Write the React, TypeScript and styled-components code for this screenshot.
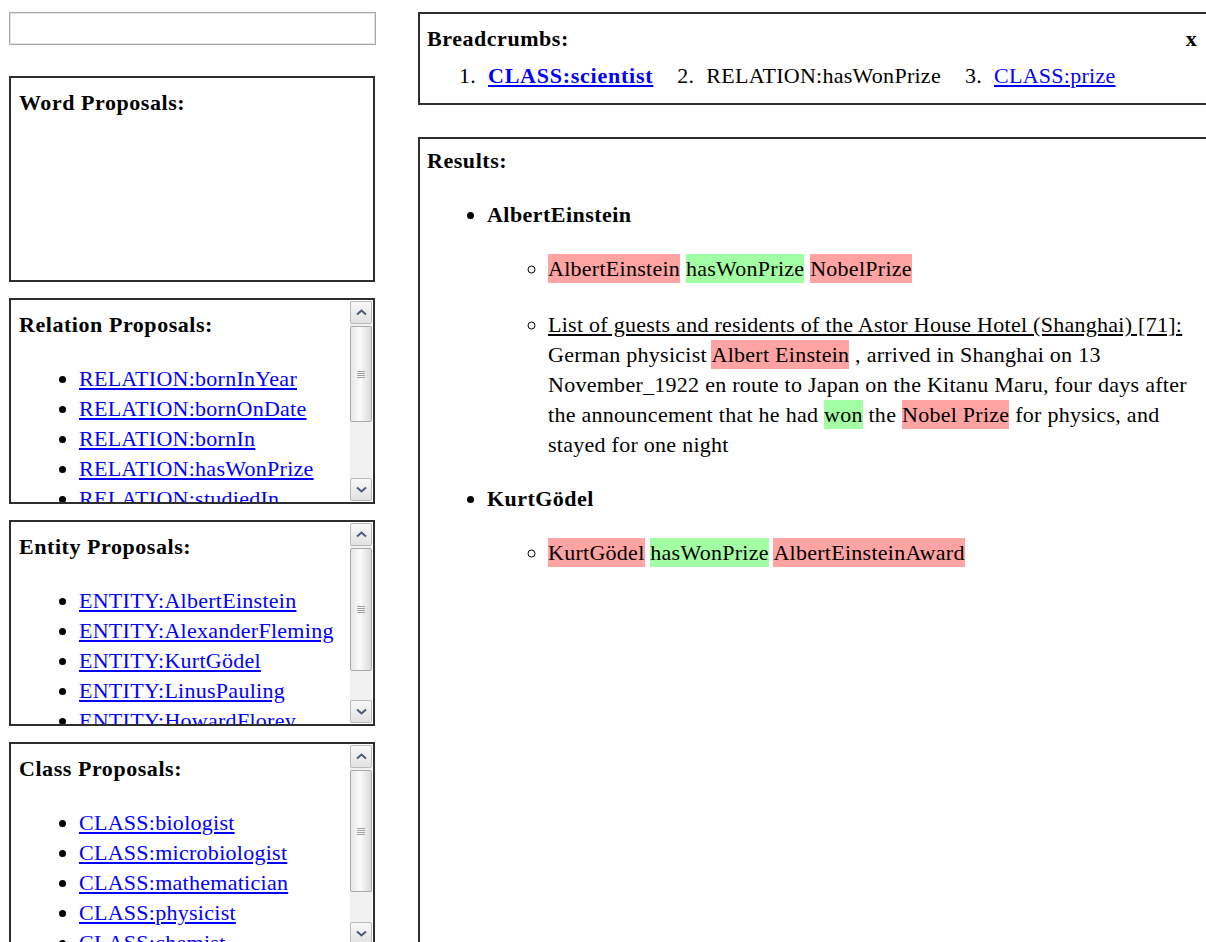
import React from 'react';
import styled, { createGlobalStyle } from 'styled-components';

const GlobalStyle = createGlobalStyle`
  html, body {
    margin: 0;
    padding: 0;
    background: #fff;
    overflow: hidden;
  }
  body {
    font-family: "Liberation Serif", "Times New Roman", serif;
    font-size: 22px;
    letter-spacing: 0.27px;
    color: #000;
  }
`;

const Page = styled.div`
  display: flex;
  align-items: flex-start;
  gap: 42px;
  padding: 12px 0 0 9px;
  width: 1300px;
`;

const Sidebar = styled.aside`
  width: 367px;
  display: flex;
  flex-direction: column;
  gap: 16px;
`;

const SearchInput = styled.input`
  box-sizing: border-box;
  width: 367px;
  height: 33px;
  margin: 0 0 15px;
  border: 1px solid #a8a8a8;
  box-shadow: inset 0 0 0 1px #e4e4e4;
  font: inherit;
  padding: 0 6px;
  outline: none;
`;

const Panel = styled.section`
  box-sizing: border-box;
  width: 366px;
  height: 206px;
  border: 2px solid #2e2e2e;
  display: flex;
  overflow: hidden;
`;

const PanelBody = styled.div`
  flex: 1;
  min-width: 0;
  padding: 10px 0 0 8px;
  overflow: hidden;
`;

const Title = styled.div`
  font-weight: bold;
  line-height: 30px;
  letter-spacing: 0.55px;
`;

const ProposalList = styled.ul`
  margin: 24px 0 0;
  padding-left: 60px;
  list-style: disc;

  li {
    line-height: 30px;
    white-space: nowrap;
  }
`;

const Link = styled.a<{ $strong?: boolean }>`
  color: #0000ff;
  text-decoration: underline;
  font-weight: ${(p) => (p.$strong ? 'bold' : 'normal')};
  letter-spacing: ${(p) => (p.$strong ? '0.75px' : '0.27px')};
  cursor: pointer;
`;

/* Classic window scrollbar drawn beside the list */
const Scrollbar = styled.div`
  width: 22px;
  margin: 1px 1px 1px 0;
  display: flex;
  flex-direction: column;
  gap: 2px;
  background: #f1f1f1;
`;

const ScrollButton = styled.div`
  box-sizing: border-box;
  height: 23px;
  border: 1px solid #b9b9b9;
  border-radius: 2px;
  background: linear-gradient(#f9f9f9, #e1e1e1);
  display: flex;
  align-items: center;
  justify-content: center;
`;

const Thumb = styled.div<{ $h: number }>`
  box-sizing: border-box;
  height: ${(p) => p.$h}px;
  border: 1px solid #a9a9a9;
  border-radius: 2px;
  background: linear-gradient(90deg, #e6e6e6, #fbfbfb 45%, #d9d9d9);
  display: flex;
  flex-direction: column;
  align-items: center;
  justify-content: center;
  gap: 1px;
`;

const Grip = styled.span`
  display: block;
  width: 8px;
  height: 1px;
  background: #a3a3a3;
`;

const Track = styled.div`
  flex: 1;
`;

const Chevron = ({ down }: { down?: boolean }) => (
  <svg width="11" height="7" viewBox="0 0 11 7">
    <polyline
      points={down ? '1,1.5 5.5,5.5 10,1.5' : '1,5.5 5.5,1.5 10,5.5'}
      fill="none"
      stroke="#4b5a77"
      strokeWidth="2"
    />
  </svg>
);

const ScrollBar = ({ thumb }: { thumb: number }) => (
  <Scrollbar>
    <ScrollButton>
      <Chevron />
    </ScrollButton>
    <Thumb $h={thumb}>
      <Grip />
      <Grip />
      <Grip />
      <Grip />
    </Thumb>
    <Track />
    <ScrollButton>
      <Chevron down />
    </ScrollButton>
  </Scrollbar>
);

const ProposalPanel = ({
  title,
  items,
  thumb,
}: {
  title: string;
  items: string[];
  thumb: number;
}) => (
  <Panel>
    <PanelBody>
      <Title>{title}</Title>
      <ProposalList>
        {items.map((it) => (
          <li key={it}>
            <Link>{it}</Link>
          </li>
        ))}
      </ProposalList>
    </PanelBody>
    <ScrollBar thumb={thumb} />
  </Panel>
);

const Main = styled.main`
  width: 796px;
  display: flex;
  flex-direction: column;
  gap: 32px;
`;

const Crumbs = styled.section`
  box-sizing: border-box;
  height: 93px;
  border: 2px solid #2e2e2e;
  padding: 10px 15px 0 7px;
`;

const CrumbHeader = styled.div`
  display: flex;
  justify-content: space-between;
  align-items: center;
`;

const Close = styled.span`
  font-weight: bold;
  line-height: 30px;
  cursor: pointer;
`;

const CrumbList = styled.ol`
  list-style: none;
  display: flex;
  gap: 24px;
  margin: 7px 0 0;
  padding-left: 32px;
  line-height: 30px;
`;

const Crumb = styled.li`
  display: flex;
  gap: 12px;
  white-space: nowrap;
`;

const Results = styled.section`
  box-sizing: border-box;
  height: 820px;
  border: 2px solid #2e2e2e;
  padding: 7px 7px 0 7px;
`;

const EntityList = styled.ul`
  margin: 24px 0 0;
  padding-left: 60px;
  list-style: disc;
`;

const EntityName = styled.div`
  font-weight: bold;
  line-height: 30px;
  letter-spacing: 0.45px;
`;

const FactList = styled.ul`
  margin: 24px 0;
  padding-left: 61px;
  list-style: circle;

  li {
    line-height: 30px;
  }
  li + li {
    margin-top: 26px;
  }
`;

const Mark = styled.span<{ $tone: 'entity' | 'relation' }>`
  background: ${(p) => (p.$tone === 'entity' ? '#ffa3a3' : '#a3ffa3')};
  padding: 2px 0;
`;

const Source = styled.span`
  text-decoration: underline;
`;

export default function App() {
  return (
    <>
      <GlobalStyle />
      <Page>
        <Sidebar>
          <SearchInput type="text" />
          <Panel>
            <PanelBody>
              <Title>Word Proposals:</Title>
            </PanelBody>
          </Panel>
          <ProposalPanel
            title="Relation Proposals:"
            thumb={96}
            items={[
              'RELATION:bornInYear',
              'RELATION:bornOnDate',
              'RELATION:bornIn',
              'RELATION:hasWonPrize',
              'RELATION:studiedIn',
              'RELATION:worksAt',
            ]}
          />
          <ProposalPanel
            title="Entity Proposals:"
            thumb={123}
            items={[
              'ENTITY:AlbertEinstein',
              'ENTITY:AlexanderFleming',
              'ENTITY:KurtGödel',
              'ENTITY:LinusPauling',
              'ENTITY:HowardFlorey',
            ]}
          />
          <ProposalPanel
            title="Class Proposals:"
            thumb={122}
            items={[
              'CLASS:biologist',
              'CLASS:microbiologist',
              'CLASS:mathematician',
              'CLASS:physicist',
              'CLASS:chemist',
            ]}
          />
        </Sidebar>

        <Main>
          <Crumbs>
            <CrumbHeader>
              <Title>Breadcrumbs:</Title>
              <Close>x</Close>
            </CrumbHeader>
            <CrumbList>
              <Crumb>
                <span>1.</span>
                <Link $strong>CLASS:scientist</Link>
              </Crumb>
              <Crumb>
                <span>2.</span>
                <span>RELATION:hasWonPrize</span>
              </Crumb>
              <Crumb>
                <span>3.</span>
                <Link>CLASS:prize</Link>
              </Crumb>
            </CrumbList>
          </Crumbs>

          <Results>
            <Title>Results:</Title>
            <EntityList>
              <li>
                <EntityName>AlbertEinstein</EntityName>
                <FactList>
                  <li>
                    <Mark $tone="entity">AlbertEinstein</Mark>{' '}
                    <Mark $tone="relation">hasWonPrize</Mark>{' '}
                    <Mark $tone="entity">NobelPrize</Mark>
                  </li>
                  <li>
                    <Source>
                      List of guests and residents of the Astor House Hotel (Shanghai) [71]:
                    </Source>
                    <br />
                    German physicist <Mark $tone="entity">Albert Einstein</Mark> , arrived in
                    Shanghai on 13 November_1922 en route to Japan on the Kitanu Maru, four days
                    after the announcement that he had <Mark $tone="relation">won</Mark> the{' '}
                    <Mark $tone="entity">Nobel Prize</Mark> for physics, and stayed for one night
                  </li>
                </FactList>
              </li>
              <li>
                <EntityName>KurtGödel</EntityName>
                <FactList>
                  <li>
                    <Mark $tone="entity">KurtGödel</Mark>{' '}
                    <Mark $tone="relation">hasWonPrize</Mark>{' '}
                    <Mark $tone="entity">AlbertEinsteinAward</Mark>
                  </li>
                </FactList>
              </li>
            </EntityList>
          </Results>
        </Main>
      </Page>
    </>
  );
}
